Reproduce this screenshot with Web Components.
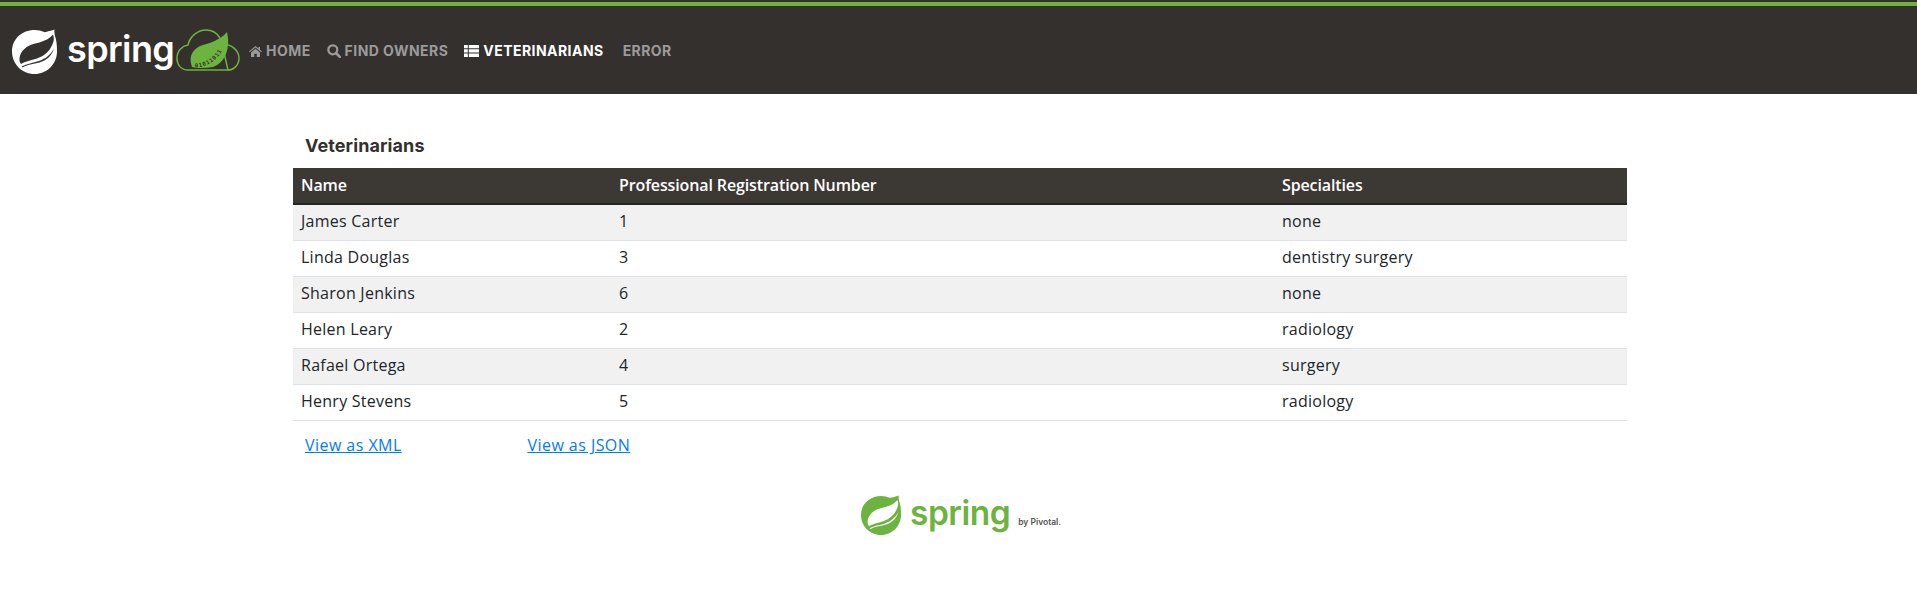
<!DOCTYPE html>
<html><head><meta charset="utf-8"><style>
html,body{margin:0;padding:0;background:#fff}
body{font-family:"Open Sans","Liberation Sans",sans-serif;color:#34302d}
</style></head><body>
<site-header>
 <nav-link slot="links" icon="home">Home</nav-link>
 <nav-link slot="links" icon="search">Find owners</nav-link>
 <nav-link slot="links" icon="list" active>Veterinarians</nav-link>
 <nav-link slot="links">Error</nav-link>
</site-header>
<page-body>
 <vet-table>
  <vet-row name="James Carter" num="1" spec="none"></vet-row>
  <vet-row name="Linda Douglas" num="3" spec="dentistry surgery"></vet-row>
  <vet-row name="Sharon Jenkins" num="6" spec="none"></vet-row>
  <vet-row name="Helen Leary" num="2" spec="radiology"></vet-row>
  <vet-row name="Rafael Ortega" num="4" spec="surgery"></vet-row>
  <vet-row name="Henry Stevens" num="5" spec="radiology"></vet-row>
 </vet-table>
</page-body>
<site-footer></site-footer>
<script>
const LEAF='M22.500 1C26 1 29.500 1.800 32.500 3.200C35.500 2.600 39 1.800 42.500 .5C42.200 2.500 42.500 4.800 43 7C44.500 11 45 16 45 22.500C45 35 35 45 22.500 45C10 45 0 35 0 22.500C0 10 10 1 22.500 1Z';
const CUT='M41 5.500C37 10.500 30 13 23 14.500C14.500 16.500 8.500 22 7.500 29C7.200 31.500 7.800 33.500 9 35C13 32.500 19 31.500 25 29.500C33 26.800 39 21 41.500 12.500C42 10 41.800 7.500 41 5.500Z M9.500 37.500C15 34.500 21 34 27 32C33 30 38.500 26 42 19.500C40 26.500 34.500 31.500 27.500 33.500C21.500 35.200 15 35.500 10.500 38.500Z';
class SiteHeader extends HTMLElement{constructor(){super();this.attachShadow({mode:'open'}).innerHTML=`
<style>
:host{display:flex;align-items:center;box-sizing:border-box;height:94px;background:#34302d;border-top:2px solid #34302d;position:relative;padding:0 0 0 12px}
.bar{position:absolute;left:0;right:0;top:0;height:4px;background:#6db33f}
.logo{display:flex;align-items:center;color:#fff;margin-top:6px}
.word{font:600 36px/1 "Inter","Lato",sans-serif;letter-spacing:-.6px;margin:-4px 0 0 10px;width:109px}
svg{display:block}
nav{display:flex;margin:6px 0 0 1px}
</style>
<div class="bar"></div>
<div class="logo">
<svg width="45" height="45" viewBox="0 0 45 45"><path fill="#fff" fill-rule="evenodd" d="${LEAF}${CUT}"/></svg>
<span class="word">spring</span>
<svg width="64" height="43" viewBox="0 0 64 43" style="margin-top:-1px"><path fill="none" stroke="#6db33f" stroke-width="1.500" d="M12 41C5 41 1 36 1 29C1 22 6 17 12 16C14 7 22 1 30 1C36 1 41 4 44 9M46 15C56 15 63 22 63 29C63 36 58 41 52 41Z"/><path fill="none" stroke="#6db33f" stroke-width="1.500" d="M12 41H52"/><path fill="#6db33f" d="M16 38C12 27 17 19 27 16C36 13.500 45 10 51 3C52.500 10 53 17 50 25C47.500 31 43 36 37 38C30 39 22 39.500 16 38Z"/><path id="bp" fill="none" d="M19 38.500C30 38.500 41 32 47 20"/><text font-family="DejaVu Sans Mono,monospace" font-weight="700" font-size="5.500" fill="#34302d" letter-spacing=".9"><textPath href="#bp">01011011</textPath></text></svg>
</div>
<nav><slot name="links"></slot></nav>`}}
const ICONS={
home:'<svg width="13" height="11" viewBox="0 0 13 11"><path fill="currentColor" d="M6.500 0L9.500 2.500V1H11V3.800L13 5.500L12.300 6.300L6.500 1.600L.7 6.300L0 5.500ZM2 6.500L6.500 2.800L11 6.500V11H7.800V7.700H5.200V11H2Z"/></svg>',
search:'<svg width="14" height="14" viewBox="0 0 14 14"><circle cx="5.800" cy="5.800" r="4.500" fill="none" stroke="currentColor" stroke-width="2.200"/><path d="M9 9L12.800 12.800" stroke="currentColor" stroke-width="2.600" stroke-linecap="round"/></svg>',
list:'<svg width="15" height="12" viewBox="0 0 15 12"><path fill="currentColor" d="M0 0H3.800V3.300H0ZM4.800 0H15V3.300H4.800ZM0 4.300H3.800V7.600H0ZM4.800 4.300H15V7.600H4.800ZM0 8.600H3.800V12H0ZM4.800 8.600H15V12H4.800Z"/></svg>'};
class NavLink extends HTMLElement{constructor(){super();const i=this.getAttribute('icon');this.attachShadow({mode:'open'}).innerHTML=`
<style>
:host{display:block;padding:0 8px;color:#9b9b9b}
:host([active]){color:#fff}
:host(:not([icon])){padding-left:11px}
a{display:flex;align-items:center;gap:4px;font:700 14px/20px "Inter","Lato",sans-serif;text-transform:uppercase;color:inherit;text-decoration:none;letter-spacing:.45px;white-space:nowrap}
</style><a href="#">${i?ICONS[i]:''}<span><slot></slot></span></a>`}}
class PageBody extends HTMLElement{constructor(){super();this.attachShadow({mode:'open'}).innerHTML=`
<style>
:host{display:block;width:1334px;margin:0 0 0 293px}
h2{margin:0;padding:41px 0 0 12px;font:700 18px/22px "Inter","Lato",sans-serif;letter-spacing:.1px;color:#34302d;height:33px}
.links{display:flex;padding:14px 0 0 12px;font:16px/20px "Open Sans",sans-serif;letter-spacing:.45px}
a{color:#007bff}
.x{width:222.500px}
</style>
<h2>Veterinarians</h2>
<slot></slot>
<div class="links"><div class="x"><a href="#">View as XML</a></div><div><a href="#">View as JSON</a></div></div>`}}
class VetTable extends HTMLElement{constructor(){super();this.attachShadow({mode:'open'}).innerHTML=`
<style>
:host{display:block}
.h{display:grid;grid-template-columns:318px 663px 1fr;height:35px;background:#3c3834;border-bottom:2px solid #25221f;color:#fff;font:600 16px/34px "Open Sans",sans-serif;letter-spacing:-.12px}
.h div{padding-left:8px}
</style>
<div class="h"><div>Name</div><div>Professional Registration Number</div><div>Specialties</div></div><slot></slot>`}}
class VetRow extends HTMLElement{constructor(){super();const g=a=>this.getAttribute(a);this.attachShadow({mode:'open'}).innerHTML=`
<style>
:host{display:grid;grid-template-columns:318px 663px 1fr;height:36px;box-sizing:border-box;border-bottom:1px solid #dee2e6;font:16px/33px "Open Sans",sans-serif;letter-spacing:.25px;color:#212529}
:host(:nth-child(odd)){background:#f1f1f1}
div{padding-left:8px}
</style><div>${g('name')}</div><div>${g('num')}</div><div>${g('spec')}</div>`}}
class SiteFooter extends HTMLElement{constructor(){super();this.attachShadow({mode:'open'}).innerHTML=`
<style>
:host{display:flex;justify-content:center;align-items:center;margin-top:40px;height:40px;padding-left:5px}
svg{display:block}
.w{font:600 33.500px/1 "Inter",sans-serif;color:#6db33f;letter-spacing:-.5px;margin:-3px 0 0 9px}
.p{font:600 8.500px/1 "Inter",sans-serif;color:#555;margin:14px 0 0 8px;white-space:nowrap}
</style>
<svg width="40" height="40" viewBox="0 0 45 45" preserveAspectRatio="none"><path fill="#6db33f" fill-rule="evenodd" d="${LEAF}${CUT}"/></svg>
<span class="w">spring</span><span class="p">by Pivotal.</span>`}}
for(const [n,c] of Object.entries({'site-header':SiteHeader,'nav-link':NavLink,'page-body':PageBody,'vet-table':VetTable,'vet-row':VetRow,'site-footer':SiteFooter}))customElements.define(n,c);
</script></body></html>
